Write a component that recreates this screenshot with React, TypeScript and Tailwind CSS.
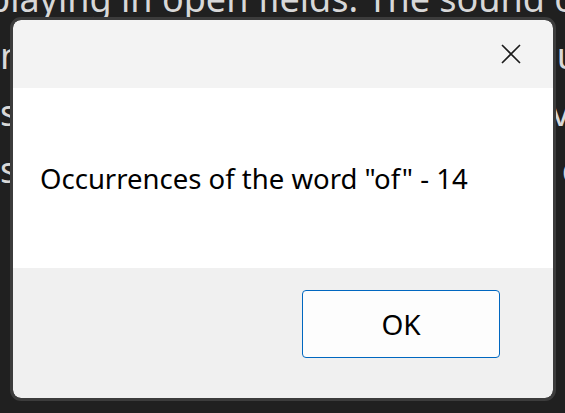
import React from "react";

const bgFont = { fontFamily: '"Noto Sans", "Open Sans", sans-serif' };
const uiFont = { fontFamily: '"Noto Sans", "Open Sans", sans-serif' };

function BgLine({ left, right, full }: { left?: string; right?: string; full?: string }) {
  return (
    <div className="h-[57px] leading-[57px] whitespace-nowrap overflow-hidden flex justify-between text-[36px] text-[#d8d8d8]">
      {full ? (
        <span className="-ml-[12px]">{full}</span>
      ) : (
        <>
          <span>{left}</span>
          <span className="-mr-[14px]">{right}</span>
        </>
      )}
    </div>
  );
}

export default function App() {
  return (
    <div className="relative w-[565px] h-[413px] overflow-hidden bg-[#202020]" style={bgFont}>
      <div className="flex flex-col -mt-[30px]">
        <BgLine full="playing in open fields. The sound of" />
        <BgLine left="n" right="u" />
        <BgLine left="s." right="vi" />
        <BgLine left="sc" right="c" />
      </div>

      <div className="absolute left-[10px] top-[17px] w-[546px] h-[384px] rounded-[11px] border-[3px] border-[#3c3c3c] overflow-hidden" style={uiFont}>
        <div className="flex flex-col h-full rounded-[8px] overflow-hidden">
          <div className="h-[68px] bg-[#f3f3f3] flex items-center justify-end pr-[32px]">
            <svg width="20" height="20" viewBox="0 0 20 20" className="text-[#1b1b1b]">
              <path d="M1 1 L19 19 M19 1 L1 19" stroke="currentColor" strokeWidth="1.6" fill="none" />
            </svg>
          </div>
          <div className="h-[180px] bg-white flex items-center pl-[27px] pt-[2px]">
            <span className="text-[27.5px] text-black">Occurrences of the word "of" - 14</span>
          </div>
          <div className="flex-1 bg-[#f0f0f0] flex justify-end items-start pt-[22px] pr-[53px]">
            <button className="w-[198px] h-[68px] rounded-[4px] border border-[#0067c0] bg-[#fdfdfd] text-[28px] text-black flex items-center justify-center">
              OK
            </button>
          </div>
        </div>
      </div>
    </div>
  );
}
